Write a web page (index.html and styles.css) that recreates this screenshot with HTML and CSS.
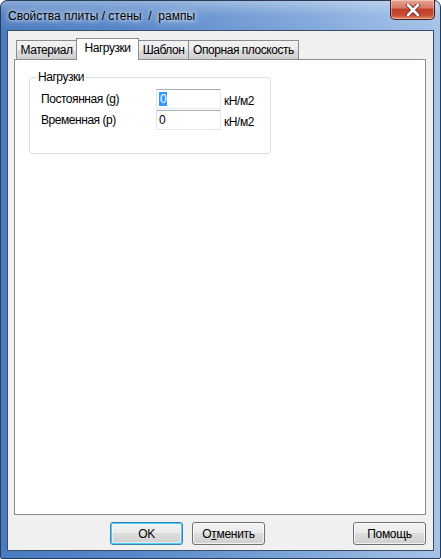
FILE: index.html
```html
<!DOCTYPE html>
<html lang="ru">
<head>
  <meta charset="UTF-8" />
  <title>Свойства плиты / стены / рампы</title>
  <link rel="stylesheet" href="styles.css">
</head>
<body>

  <!-- WINDOW FRAME -->
  <div class="window">

    <!-- TITLE BAR -->
    <div class="titlebar">
      <span class="title">Свойства плиты / стены &nbsp;/&nbsp; рампы</span>
      <button class="close">
        <svg width="16" height="12" viewBox="0 0 16 12">
          <path d="M3 1 L13 11 M13 1 L3 11" stroke="#5a2a25" stroke-width="4.2" stroke-linecap="round"/>
          <path d="M3 1 L13 11 M13 1 L3 11" stroke="#ffffff" stroke-width="2.6" stroke-linecap="round"/>
        </svg>
      </button>
    </div>

    <!-- CLIENT AREA -->
    <div class="client">

      <!-- TABS -->
      <div class="tabs">
        <div class="tab t-mat">Материал</div>
        <div class="tab t-load active">Нагрузки</div>
        <div class="tab t-tpl">Шаблон</div>
        <div class="tab t-plane">Опорная плоскость</div>
      </div>

      <div class="panel">
        <fieldset class="group">
          <legend>Нагрузки</legend>
          <div class="loads">
            <span class="label">Постоянная (g)</span>
            <div class="field"><span class="sel">0</span></div>
            <span class="unit">кН/м2</span>

            <span class="label">Временная (p)</span>
            <div class="field">0</div>
            <span class="unit">кН/м2</span>
          </div>
        </fieldset>
      </div>

      <!-- BUTTONS -->
      <div class="buttons">
        <button class="btn default">OK</button>
        <button class="btn">О<u>т</u>менить</button>
        <button class="btn help">Помощь</button>
      </div>

    </div>
  </div>

</body>
</html>
```

FILE: styles.css
```css
body {
  margin: 0;
  font-family: "Liberation Sans", Arial, sans-serif;
  font-size: 12px;
  color: #000;
  background: #ffffff;
}

/* WINDOW */
.window {
  width: 441px;
  height: 559px;
  box-sizing: border-box;
  border: 1px solid #2a3b55;
  border-radius: 7px 7px 2px 2px;
  background:
    linear-gradient(to bottom, rgba(255,255,255,0.35) 0, rgba(255,255,255,0.05) 14px, rgba(255,255,255,0) 30px),
    linear-gradient(to right, #4a7bc0 0, #5887c9 30%, #7aa3d8 65%, #a6c3e8 100%);
  padding: 0 6px 7px 6px;
  display: flex;
  flex-direction: column;
}

/* TITLE BAR */
.titlebar {
  height: 29px;
  display: flex;
  align-items: flex-start;
  justify-content: space-between;
}

.title {
  margin: 8px 0 0 1px;
  font-size: 12px;
  color: #000;
  text-shadow: 0 0 8px #ffffff, 0 0 4px rgba(255,255,255,0.9);
}

.close {
  width: 45px;
  height: 20px;
  margin: -1px -1px 0 0;
  padding: 0;
  border: 1px solid #4a1d1a;
  border-top: none;
  border-radius: 0 0 5px 5px;
  background: linear-gradient(to bottom, #e8a493 0, #d47a65 40%, #c0402a 50%, #c74d35 80%, #e48a6a 100%);
  box-shadow: inset 0 0 0 1px rgba(255,255,255,0.35);
  display: flex;
  align-items: center;
  justify-content: center;
}

/* CLIENT */
.client {
  flex: 1;
  border: 1px solid #3a4c66;
  background: #f0f0f0;
  display: flex;
  flex-direction: column;
  padding: 7px 7px 5px 6px;
  letter-spacing: -0.45px;
}

/* TABS */
.tabs {
  display: flex;
  align-items: flex-end;
  padding-left: 2px;
  height: 21px;
  position: relative;
  z-index: 1;
}

.tab {
  height: 19px;
  box-sizing: border-box;
  border: 1px solid #898c95;
  border-bottom: none;
  background: linear-gradient(to bottom, #f2f2f2 0, #ebebeb 50%, #dddddd 51%, #cfcfcf 100%);
  padding-top: 2px;
  text-align: center;
  white-space: nowrap;
}

.tab + .tab {
  margin-left: -1px;
}

.t-mat { width: 61px; }
.t-load { width: 63px; }
.t-tpl { width: 51px; }
.t-plane { width: 111px; }

.tab.active {
  height: 22px;
  margin-bottom: -1px;
  background: #ffffff;
  position: relative;
  z-index: 2;
}

.panel {
  height: 456px;
  box-sizing: border-box;
  border: 1px solid #898c95;
  background: #ffffff;
  padding: 10px 0 0 14px;
}

/* GROUP BOX */
.group {
  width: 242px;
  height: 84px;
  box-sizing: border-box;
  margin: 0;
  border: 1px solid #d5dfe5;
  border-radius: 3px;
  padding: 0 0 0 11px;
}

.group legend {
  padding: 0 1px;
  margin-left: -4px;
}

.loads {
  display: grid;
  grid-template-columns: 112px 65px auto;
  column-gap: 3px;
  row-gap: 1px;
  align-items: center;
  margin-top: 5px;
}

.field {
  height: 20px;
  box-sizing: border-box;
  border: 1px solid #e3e9ef;
  border-top-color: #abadb3;
  border-left-color: #e2e3ea;
  background: #fff;
  padding: 2px 0 0 2px;
  line-height: 14px;
}

.sel {
  background: #3399ff;
  color: #fff;
  padding: 0 1px;
}

.unit {
  padding-top: 3px;
}

/* BUTTONS */
.buttons {
  display: flex;
  margin-top: 7px;
  padding-left: 96px;
  gap: 9px;
}

.btn {
  width: 73px;
  height: 23px;
  box-sizing: border-box;
  font-family: inherit;
  font-size: 12px;
  letter-spacing: -0.3px;
  color: #000;
  border: 1px solid #707070;
  border-radius: 3px;
  background: linear-gradient(to bottom, #f2f2f2 0, #ebebeb 45%, #dddddd 50%, #cfcfcf 100%);
  box-shadow: inset 0 0 0 1px rgba(255,255,255,0.7);
  padding: 0;
}

.btn.default {
  border-color: #3c7fb1;
  box-shadow: inset 0 0 0 1px #48d0fc, inset 0 0 0 2px rgba(255,255,255,0.5);
}

.btn.help {
  margin-left: auto;
}
```
